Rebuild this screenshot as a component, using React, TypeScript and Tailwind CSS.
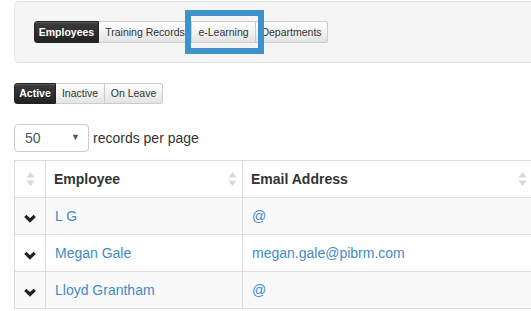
import React from "react";

const Sort = () => (
  <svg width="9" height="16" viewBox="0 0 9 16" className="block">
    <path d="M4.5 1 L8.5 6.5 L0.5 6.5 Z" fill="#d8d8d8" />
    <path d="M4.5 15 L8.5 9.5 L0.5 9.5 Z" fill="#d8d8d8" />
  </svg>
);

const Chevron = () => (
  <svg width="12" height="9" viewBox="0 0 12 9" className="block">
    <path d="M1.3 1.8 L6 6.5 L10.7 1.8" fill="none" stroke="#222" strokeWidth="3.2" />
  </svg>
);

const dark =
  "bg-gradient-to-b from-[#3d3d3d] to-[#222] text-white font-bold border border-[#222] shadow-[inset_0_1px_0_rgba(255,255,255,0.15)]";
const light =
  "bg-gradient-to-b from-white to-[#e4e4e4] text-[#333] border border-[#ccc]";

export default function App() {
  const rows = [
    { name: "L G", email: "@" },
    { name: "Megan Gale", email: "megan.gale@pibrm.com" },
    { name: "Lloyd Grantham", email: "@" },
  ];
  return (
    <div
      className="w-[531px] h-[311px] overflow-hidden bg-white relative"
      style={{ fontFamily: '"Liberation Sans", Arial, sans-serif' }}
    >
      <div className="w-[600px] pl-[14px]">
        <div className="mt-[1px] h-[62px] bg-[#f5f5f5] border border-[#e3e3e3] rounded-[4px] pl-[19px] pt-[19px]">
          <div className="flex h-[22px] text-[10.5px] leading-none">
            <div className={`${dark} rounded-l-[3px] w-[65px] justify-center flex items-center`}>Employees</div>
            <div className={`${light} border-l-0 w-[93px] justify-center flex items-center`}>Training Records</div>
            <div className={`${light} border-l-0 w-[64px] justify-center flex items-center`}>e-Learning</div>
            <div className={`${light} border-l-0 rounded-r-[3px] w-[72px] justify-center flex items-center`}>Departments</div>
          </div>
        </div>

        <div className="mt-[20px] flex h-[21px] text-[10.5px] leading-none">
          <div className={`${dark} rounded-l-[3px] w-[42px] justify-center flex items-center`}>Active</div>
          <div className={`${light} border-l-0 w-[49px] justify-center flex items-center`}>Inactive</div>
          <div className={`${light} border-l-0 rounded-r-[3px] w-[58px] justify-center flex items-center`}>On Leave</div>
        </div>

        <div className="mt-[20px] flex items-center h-[28px]">
          <div className="w-[75px] h-[28px] border border-[#ccc] rounded-[4px] flex items-center pl-[10px] pr-[8px] text-[14px] text-[#555]">
            <span className="flex-1">50</span>
            <span className="text-[9px] text-[#555]">▼</span>
          </div>
          <span className="ml-[4px] text-[14px] text-[#333]">records per page</span>
        </div>

        <div className="mt-[8px] w-[560px] border-t border-l border-[#ddd]">
          <div className="flex h-[37px] border-b border-[#ddd] text-[14px] font-bold text-[#333]">
            <div className="w-[31px] border-r border-[#ddd] flex items-center justify-center">
              <Sort />
            </div>
            <div className="w-[197px] border-r border-[#ddd] flex items-center pl-[8px] pr-[5px]">
              <span className="flex-1">Employee</span>
              <Sort />
            </div>
            <div className="w-[289px] flex items-center pl-[8px] pr-[5px]">
              <span className="flex-1">Email Address</span>
              <Sort />
            </div>
          </div>
          {rows.map((r, i) => (
            <div
              key={i}
              className={`flex h-[37px] border-b border-[#ddd] text-[14px] text-[#428bca] ${
                i % 2 === 0 ? "bg-[#f9f9f9]" : "bg-white"
              }`}
            >
              <div className="w-[31px] border-r border-[#ddd] flex items-center justify-center pt-[5px]">
                <Chevron />
              </div>
              <div className="w-[197px] border-r border-[#ddd] flex items-center pl-[9px]">{r.name}</div>
              <div className="flex-1 flex items-center pl-[9px]">{r.email}</div>
            </div>
          ))}
        </div>
      </div>

      <div className="absolute left-[185px] top-[10px] w-[79px] h-[44px] border-[6px] border-[#3d92cb]" />
    </div>
  );
}
